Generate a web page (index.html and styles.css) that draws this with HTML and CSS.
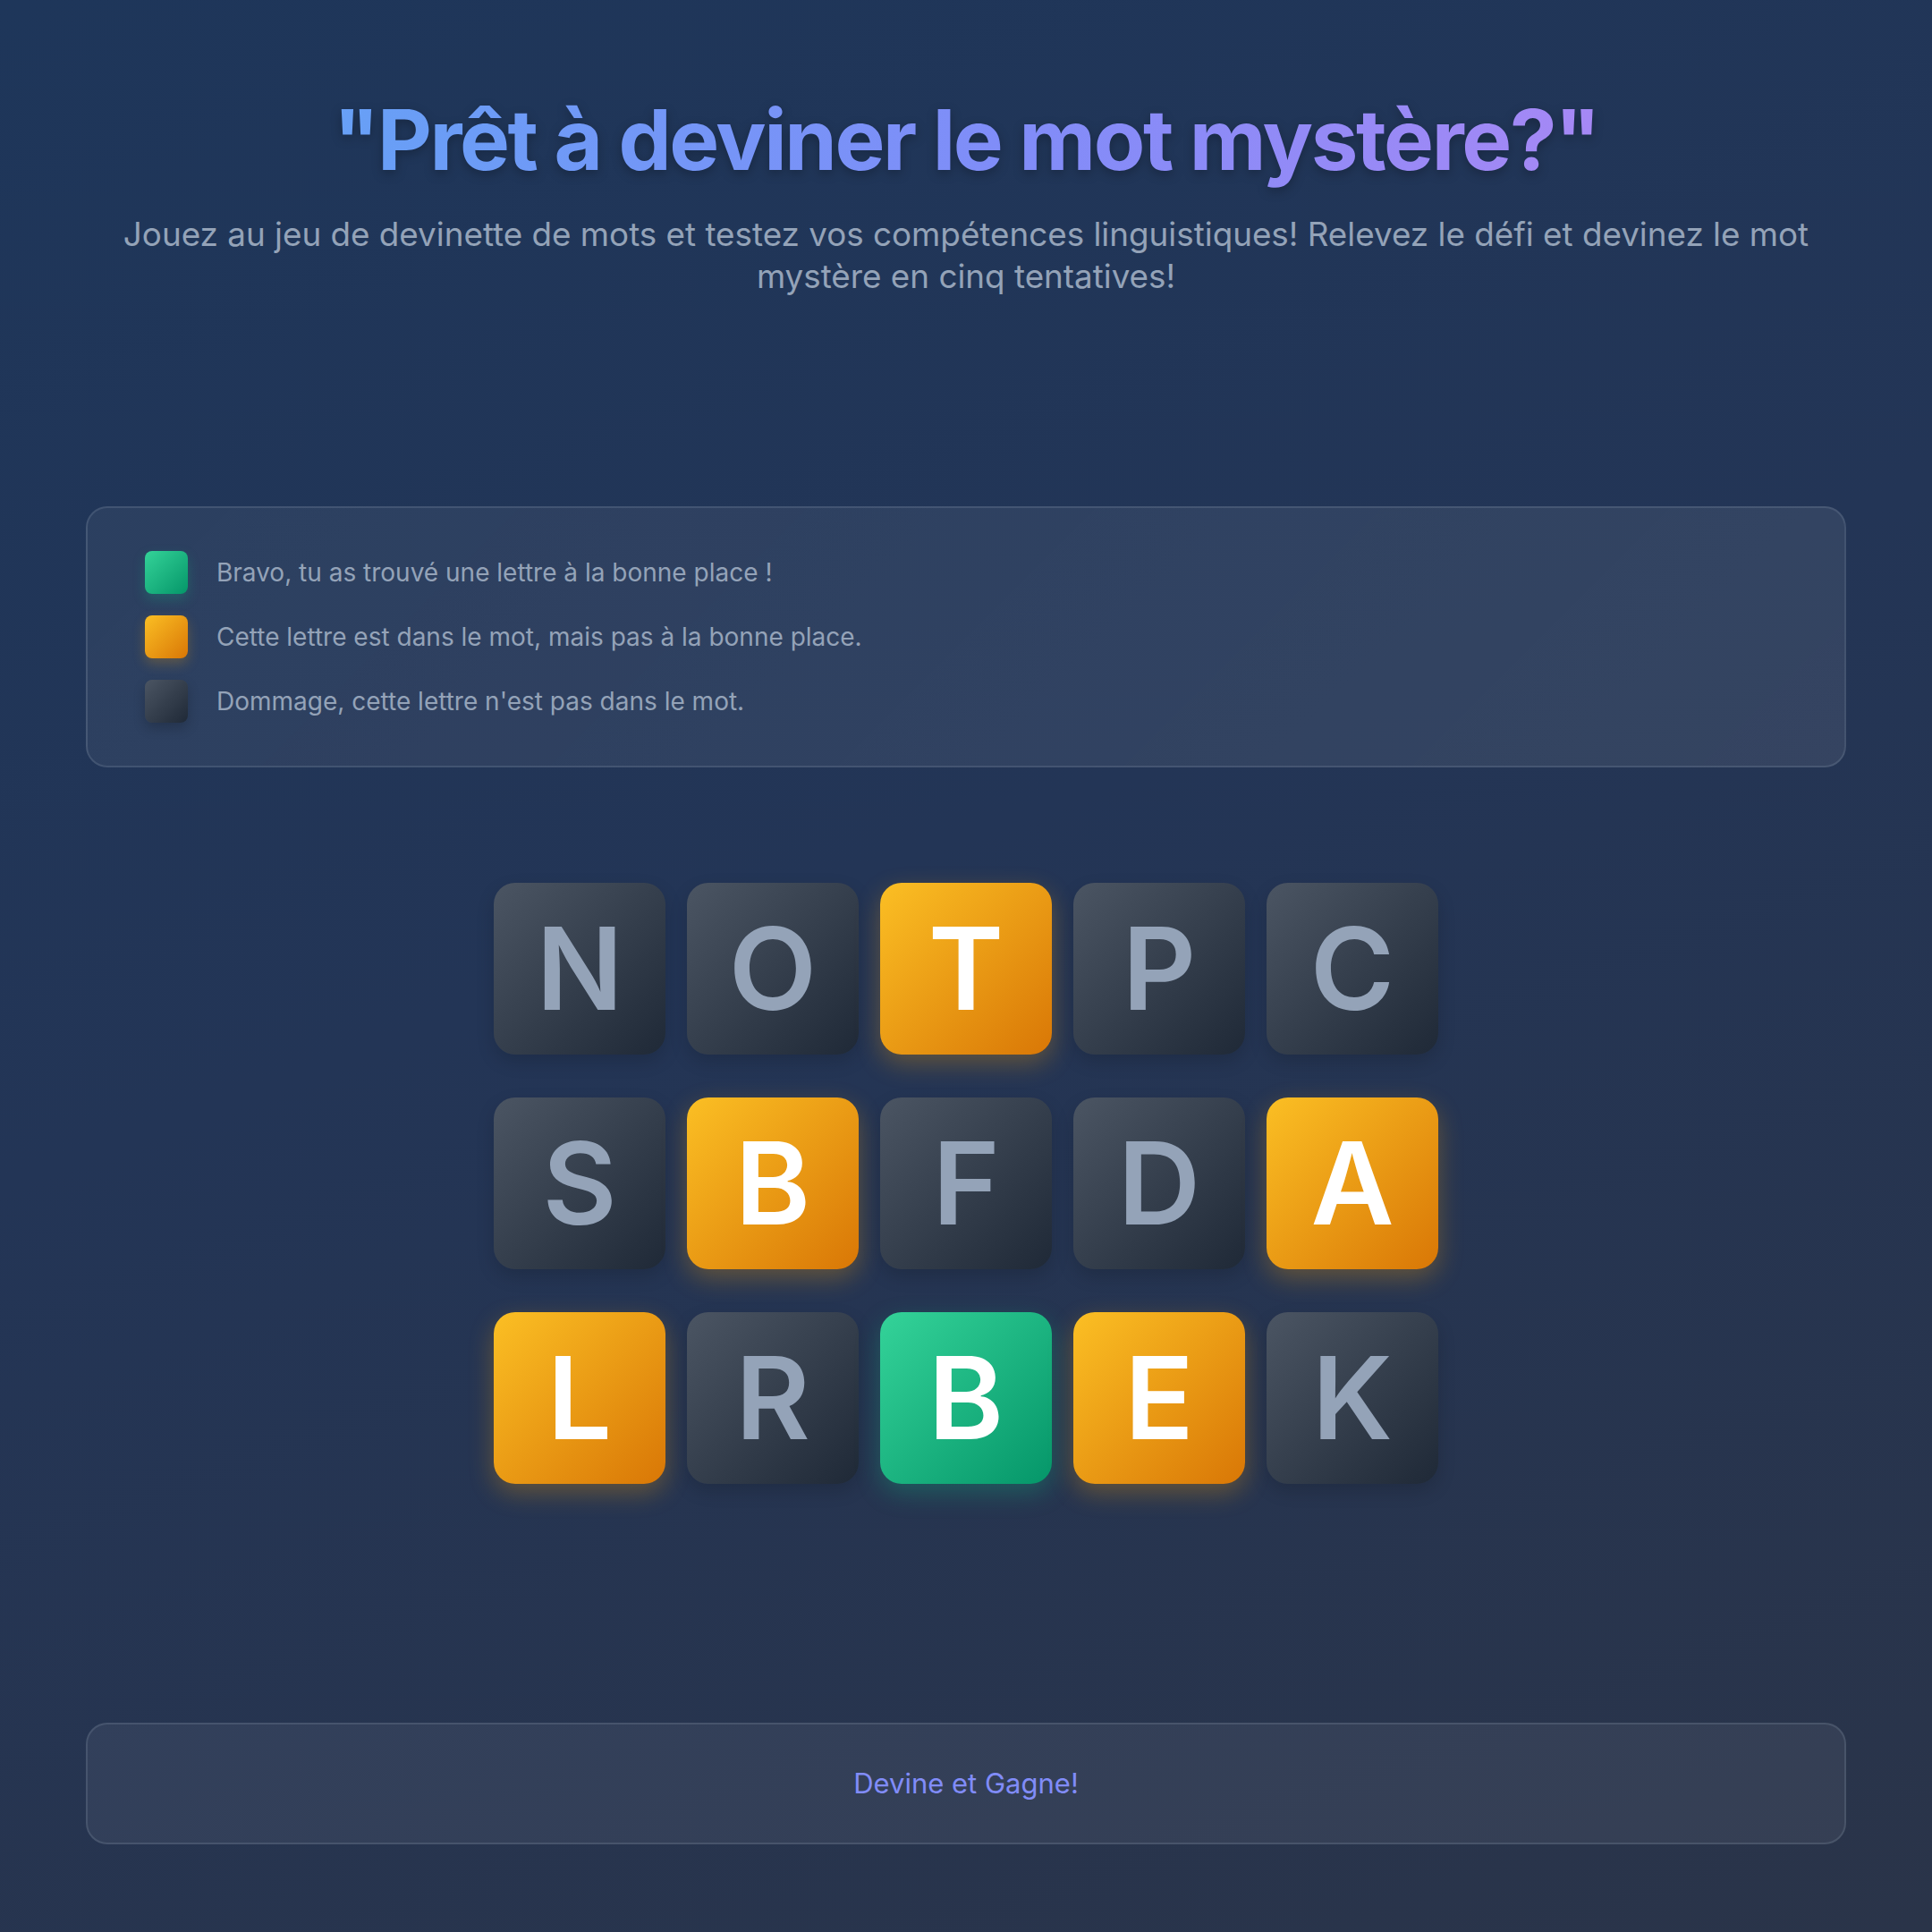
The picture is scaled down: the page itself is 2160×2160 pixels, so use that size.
FILE: index.html
```html
<!DOCTYPE html>
<html lang="fr">
<head>
<meta charset="utf-8">
<title>Devine et Gagne!</title>
<link rel="stylesheet" href="styles.css">
</head>
<body>
<div class="page">
  <header class="hero">
    <h1 class="title">"Prêt à deviner le mot mystère?"</h1>
    <p class="subtitle">Jouez au jeu de devinette de mots et testez vos compétences linguistiques! Relevez le défi et devinez le mot mystère en cinq tentatives!</p>
  </header>

  <section class="legend">
    <div class="legend-row"><span class="swatch swatch-green"></span><span>Bravo, tu as trouvé une lettre à la bonne place !</span></div>
    <div class="legend-row"><span class="swatch swatch-orange"></span><span>Cette lettre est dans le mot, mais pas à la bonne place.</span></div>
    <div class="legend-row"><span class="swatch swatch-gray"></span><span>Dommage, cette lettre n'est pas dans le mot.</span></div>
  </section>

  <section class="board">
    <div class="tile gray">N</div>
    <div class="tile gray">O</div>
    <div class="tile orange">T</div>
    <div class="tile gray">P</div>
    <div class="tile gray">C</div>
    <div class="tile gray">S</div>
    <div class="tile orange">B</div>
    <div class="tile gray">F</div>
    <div class="tile gray">D</div>
    <div class="tile orange">A</div>
    <div class="tile orange">L</div>
    <div class="tile gray">R</div>
    <div class="tile green">B</div>
    <div class="tile orange">E</div>
    <div class="tile gray">K</div>
  </section>

  <footer class="footer">
    <span class="footer-text">Devine et Gagne!</span>
  </footer>
</div>
</body>
</html>
```

FILE: styles.css
```css
* { box-sizing: border-box; }
html, body { margin: 0; padding: 0; }
body {
  min-height: 2160px;
  background: linear-gradient(160deg, #1e365a 0%, #233556 45%, #2a3449 100%);
  font-family: Inter, "Noto Sans", "Liberation Sans", sans-serif;
  color: #94a3b8;
}
.page {
  padding: 100px 96px 96px;
  display: flex;
  flex-direction: column;
}
.hero { text-align: center; }
.title {
  margin: 0;
  font-size: 94px;
  line-height: 1.2;
  font-weight: 700;
  letter-spacing: -2.4px;
  background: linear-gradient(90deg, #67a0f6 0%, #818cf8 55%, #a688f5 100%);
  -webkit-background-clip: text;
  background-clip: text;
  color: transparent;
  display: inline-block;
  filter: drop-shadow(0 4px 6px rgba(0,0,0,0.25));
}
.subtitle {
  margin: 25px 0 0;
  font-size: 36.8px;
  line-height: 47px;
  color: #94a3b8;
}
.legend {
  margin-top: 234px;
  padding: 48px 64px;
  border: 2px solid rgba(148,163,184,0.2);
  border-radius: 24px;
  background: linear-gradient(135deg, rgba(255,255,255,0.05), rgba(255,255,255,0.08));
  display: flex;
  flex-direction: column;
  gap: 24px;
}
.legend-row {
  display: flex;
  align-items: center;
  gap: 32px;
  font-size: 28px;
  color: #94a3b8;
}
.swatch {
  width: 48px;
  height: 48px;
  border-radius: 8px;
  flex: none;
}
.swatch-green { background: linear-gradient(135deg, #34d399, #059669); box-shadow: 0 6px 14px rgba(16,185,129,0.25); }
.swatch-orange { background: linear-gradient(135deg, #fbbf24, #d97706); box-shadow: 0 6px 14px rgba(245,158,11,0.25); }
.swatch-gray { background: linear-gradient(135deg, #4b5563, #1f2937); box-shadow: 0 6px 14px rgba(0,0,0,0.2); }
.board {
  margin: 129px auto 0;
  display: grid;
  grid-template-columns: repeat(5, 192px);
  grid-auto-rows: 192px;
  column-gap: 24px;
  row-gap: 48px;
}
.tile {
  border-radius: 24px;
  display: flex;
  align-items: center;
  justify-content: center;
  font-size: 128px;
  font-weight: 600;
  line-height: 1;
}
.tile.gray {
  background: linear-gradient(135deg, #4b5563 0%, #1f2937 100%);
  color: #94a3b8;
  box-shadow: 0 8px 20px rgba(0,0,0,0.15);
}
.tile.orange {
  background: linear-gradient(135deg, #fbbf24 0%, #d97706 100%);
  color: #ffffff;
  box-shadow: 0 10px 28px rgba(245,158,11,0.3);
}
.tile.green {
  background: linear-gradient(135deg, #34d399 0%, #059669 100%);
  color: #ffffff;
  box-shadow: 0 10px 28px rgba(16,185,129,0.3);
}
.footer {
  margin-top: 267px;
  height: 136px;
  border: 2px solid rgba(148,163,184,0.2);
  border-radius: 24px;
  background: rgba(255,255,255,0.06);
  display: flex;
  align-items: center;
  justify-content: center;
}
.footer-text {
  font-size: 31px;
  color: #818cf8;
}
```
